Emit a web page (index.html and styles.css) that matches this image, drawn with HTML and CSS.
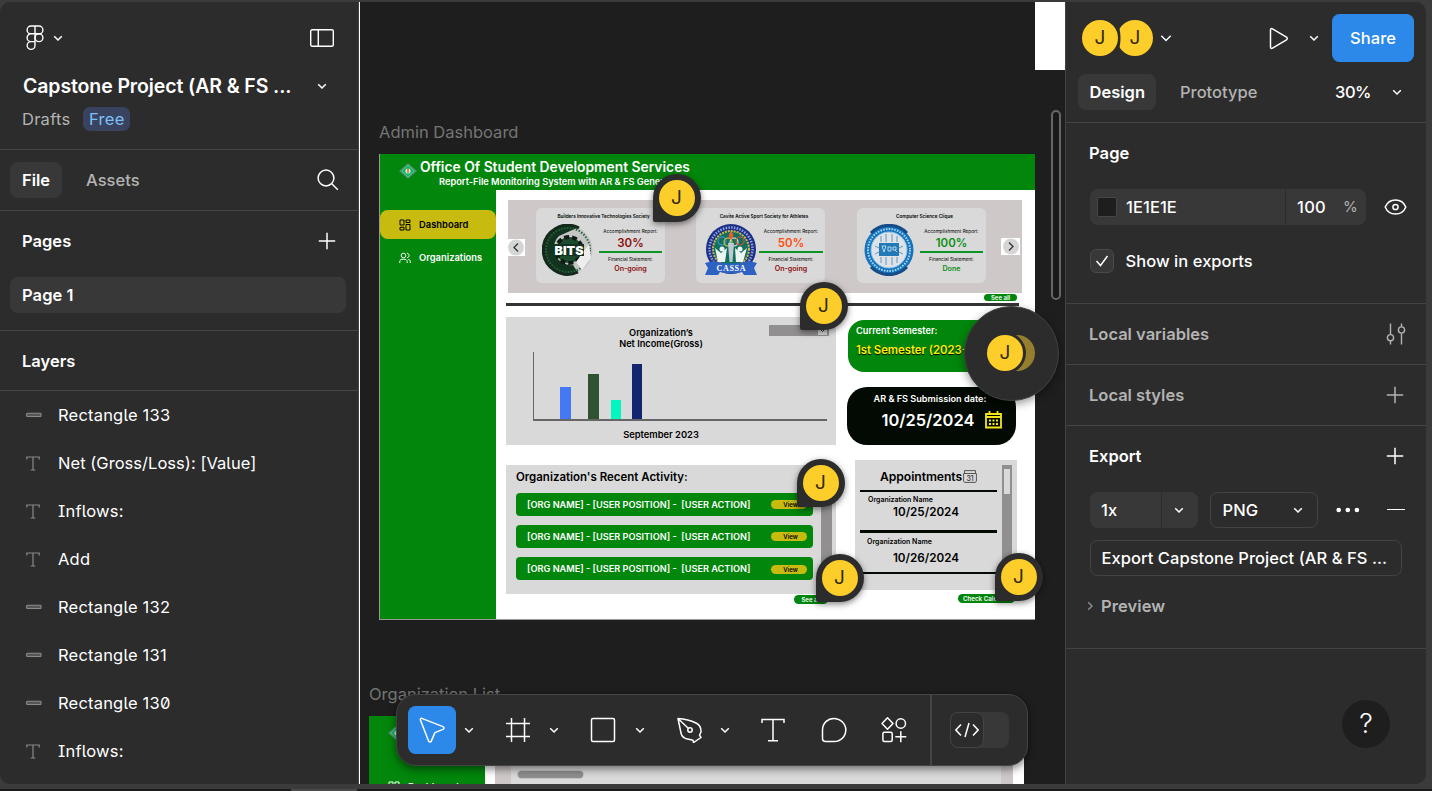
FILE: index.html
```html
<!DOCTYPE html>
<html lang="en">
<head>
<meta charset="utf-8">
<title>Capstone Project</title>
<link rel="stylesheet" href="styles.css">
</head>
<body>
<svg class="defs" width="0" height="0">
  <symbol id="chev" viewBox="0 0 12 12"><path d="M2.2 4.2 6 8l3.8-3.8" fill="none" stroke="currentColor" stroke-width="1.5"/></symbol>
  <symbol id="plus" viewBox="0 0 18 18"><path d="M9 .8v16.4M.8 9h16.4" fill="none" stroke="currentColor" stroke-width="1.5"/></symbol>
  <symbol id="tee" viewBox="0 0 14 15"><path d="M.8 3.5V1h12.4v2.5M7 1v13M4.700 14h4.600" fill="none" stroke="currentColor" stroke-width="1.2"/></symbol>
  <symbol id="bar" viewBox="0 0 16 6"><rect x=".7" y="1.200" width="14.300" height="3.300" rx=".6" fill="#555" stroke="currentColor" stroke-width="1.100"/></symbol>
  <symbol id="grid" viewBox="0 0 12 12"><path d="M1 1h4v5H1zM7 1h4v2.500H7zM7 5.500h4V11H7zM1 8.300h4V11H1z" fill="none" stroke="currentColor" stroke-width="1"/></symbol>
  <symbol id="crest" viewBox="0 0 18 16"><path d="M9 0l9 8-9 8-9-8z" fill="#58846a"/><path d="M9 2l6.500 6L9 14 2.500 8z" fill="#16b36a" stroke="#3ff0a0" stroke-width=".7"/><circle cx="9" cy="8" r="2.600" fill="#d8efc8"/><path d="M9 5v5" stroke="#e0662c" stroke-width="1.500"/></symbol>
</svg>
<div class="window">
  <aside class="left">
    <header class="file-head">
      <div class="row brand">
        <svg width="18" height="26" viewBox="0 0 18 26" fill="none" stroke="#fff" stroke-width="1.4"><path d="M9 1H5a3.900 3.900 0 0 0 0 7.800h4zM9 1h4a3.900 3.900 0 0 1 0 7.800H9zM9 8.800H5a3.900 3.900 0 0 0 0 7.800h4zM9 16.600H5a3.900 3.900 0 1 0 4 3.900z"/><circle cx="13" cy="12.700" r="3.900"/></svg>
        <svg class="chev logo-chev"><use href="#chev"/></svg>
        <svg class="push" width="24" height="18" viewBox="0 0 24 18" fill="none" stroke="#fff" stroke-width="1.400"><rect x=".7" y=".7" width="22.600" height="16.600" rx="1.500"/><path d="M8.300 1v16"/></svg>
      </div>
      <div class="row title"><b>Capstone Project (AR &amp; FS ...</b><svg class="chev push"><use href="#chev"/></svg></div>
      <div class="row sub"><span>Drafts</span><span class="badge">Free</span></div>
    </header>
    <nav class="row tabs">
      <span class="tab on">File</span><span class="tab">Assets</span>
      <svg class="push" width="22" height="22" viewBox="0 0 22 22" fill="none" stroke="#fff" stroke-width="1.500"><circle cx="9" cy="9" r="7.900"/><path d="M14.800 14.800l6 6"/></svg>
    </nav>
    <section class="pages">
      <div class="row sect"><b>Pages</b><svg class="plus push"><use href="#plus"/></svg></div>
      <div class="page-item">Page 1</div>
    </section>
    <div class="row sect layers-head"><b>Layers</b></div>
    <ul class="layers">
      <li><svg class="l-bar"><use href="#bar"/></svg>Rectangle 133</li>
      <li><svg class="l-tee"><use href="#tee"/></svg><span class="net">Net (Gross/Loss): [Value]</span></li>
      <li><svg class="l-tee"><use href="#tee"/></svg>Inflows:</li>
      <li><svg class="l-tee"><use href="#tee"/></svg>Add</li>
      <li><svg class="l-bar"><use href="#bar"/></svg>Rectangle 132</li>
      <li><svg class="l-bar"><use href="#bar"/></svg>Rectangle 131</li>
      <li><svg class="l-bar"><use href="#bar"/></svg>Rectangle 130</li>
      <li><svg class="l-tee"><use href="#tee"/></svg>Inflows:</li>
    </ul>
  </aside>

  <main class="canvas">
    <div class="node blank"></div>
    <div class="node label label-a">Admin Dashboard</div>
    <div class="node board">
      <header class="b-head">
        <svg class="b-crest"><use href="#crest"/></svg>
        <div><div class="b-title">Office Of Student Development Services</div><div class="b-sub">Report-File Monitoring System with AR &amp; FS Generation</div></div>
      </header>
      <div class="b-body">
        <nav class="b-side">
          <div class="b-link on"><svg width="12" height="12"><use href="#grid"/></svg>Dashboard</div>
          <div class="b-link"><svg width="12" height="12" viewBox="0 0 12 12" fill="none" stroke="#fff" stroke-width="1"><circle cx="4.500" cy="3.500" r="2.300"/><path d="M.8 11V9.500c0-1.600 1.300-2.300 3.700-2.300s3.700.7 3.700 2.300V11M8 1.300c2.800 0 2.800 4.300 0 4.300M9.300 7.400c1.300.3 2 1 2 2.200V11"/></svg>Organizations</div>
        </nav>
        <div class="b-main">
          <div class="carousel">
            <span class="arrow"><svg width="16" height="17" viewBox="0 0 16 16"><circle cx="8" cy="8" r="8" fill="#d5d5d5"/><path d="M10 4L6 8l4 4" fill="none" stroke="#333" stroke-width="1.300"/></svg></span>
            <article class="org">
              <h4>Builders Innovative Technologies Society</h4>
              <svg class="seal" viewBox="0 0 52 52"><circle cx="26" cy="26" r="24.500" fill="#c4c6c5"/><path d="M37 3A25 25 0 1 0 36 49L31 41A17 17 0 0 1 17 12z" fill="#12331f"/><path d="M37 4A24.500 24.500 0 1 0 36 48" fill="none" stroke="#14281b" stroke-width="3"/><circle cx="26" cy="26" r="22" fill="none" stroke="#27623a" stroke-width="2" stroke-dasharray="1.500 1.500"/><circle cx="27" cy="26" r="13" fill="#1c4a2e" stroke="#101a14" stroke-width="4" stroke-dasharray="5 3"/><path d="M34 38l13-18 2 14-9 12z" fill="#ecedec"/><path d="M11 20h31v12H11z" fill="#123220"/><text x="27" y="30.500" text-anchor="middle" textLength="29" lengthAdjust="spacingAndGlyphs" class="t-bits">BITS</text></svg>
              <div class="stat"><small>Accomplishment Report:</small><strong class="dred">30%</strong><i class="line"></i><small>Financial Statement:</small><em class="dred">On-going</em></div>
            </article>
            <article class="org two">
              <h4>Cavite Active Sport Society for Athletes</h4>
              <svg class="seal" viewBox="0 0 52 52"><circle cx="26" cy="25" r="25" fill="#1d2f86"/><circle cx="26" cy="25" r="21.500" fill="none" stroke="#8fa5dc" stroke-width="2.500" stroke-dasharray="1.500 1.300"/><circle cx="26" cy="25" r="18" fill="#11715f" stroke="#cdb84a" stroke-width="2" stroke-dasharray="2 1"/><g fill="none" stroke-width="1.100"><circle cx="17" cy="17" r="4" stroke="#4a8fd8"/><circle cx="23" cy="18" r="4" stroke="#e8c93a"/><circle cx="29" cy="18" r="4" stroke="#efefef"/><circle cx="35" cy="17" r="4" stroke="#e0492d"/></g><path d="M26 7c4 4 2 6 0 9-3-3-3-5 0-9z" fill="#f05a28"/><path d="M23 19h6l-1.500 19h-3z" fill="#bfc9cf"/><g fill="#edf3f0"><circle cx="17" cy="25" r="2.500"/><circle cx="35" cy="25" r="2.500"/><path d="M10 24l6 5 6-5-2 14h-7zM30 24l6 5 6-5-4 14h-7z"/></g><path d="M0 39l8-2q18 5 36 0l8 2-3 5 3 7H39l-2-3q-11 3-22 0l-2 3H0l3-7z" fill="#2d62c2"/><text x="26" y="46.500" text-anchor="middle" textLength="29" class="t-cassa">CASSA</text></svg>
              <div class="stat"><small>Accomplishment Report:</small><strong class="orange">50%</strong><i class="line"></i><small>Financial Statement:</small><em class="dred">On-going</em></div>
            </article>
            <article class="org">
              <h4>Computer Science Clique</h4>
              <svg class="seal" viewBox="0 0 52 52"><circle cx="26" cy="26" r="24.500" fill="#1772ba"/><path d="M8 9A25 25 0 0 1 44 9M8 43A25 25 0 0 0 44 43" fill="none" stroke="#154b86" stroke-width="3"/><circle cx="26" cy="26" r="21" fill="none" stroke="#9fd6f4" stroke-width="2" stroke-dasharray="1.600 1.200"/><circle cx="26" cy="26" r="18" fill="#dfe3e6" stroke="#84c4ec"/><path d="M18 18v-6M23 18v-8M29 18v-8M34 18v-6M18 33v6M23 33v8M29 33v8M34 33v6M12 22l4 2M12 30l4-2M40 22l-4 2M40 30l-4-2" stroke="#3b86bd" fill="none" stroke-width=".8"/><path d="M16 19h20v13H16z" fill="#2279b6"/><path d="M19 22h4l-2 6zM25 23h3v4h-3zM30 23h3v3h-3zM32 26l2 2" stroke="#d4edfc" fill="none" stroke-width=".8"/></svg>
              <div class="stat"><small>Accomplishment Report:</small><strong class="ok">100%</strong><i class="line"></i><small>Financial Statement:</small><em class="ok">Done</em></div>
            </article>
            <span class="arrow r"><svg width="16" height="17" viewBox="0 0 16 16"><circle cx="8" cy="8" r="8" fill="#d5d5d5"/><path d="M6 4l4 4-4 4" fill="none" stroke="#333" stroke-width="1.300"/></svg></span>
          </div>
          <span class="pill see">See all</span>
          <div class="rule"></div>
          <div class="cols">
            <div class="col-l">
              <section class="chart">
                <span class="select"><svg width="9" height="9" viewBox="0 0 9 9"><path d="M0 0h9v9H0z" fill="#d4d4d4"/><path d="M2.500 3.500l2 2 2-2" fill="none" stroke="#333"/></svg></span>
                <h5>Organization’s<br>Net Income(Gross)</h5>
                <div class="plot"><i style="height:32px"></i><i style="height:45px"></i><i style="height:19px"></i><i style="height:55px"></i></div>
                <p>September 2023</p>
              </section>
              <section class="recent">
                <h5>Organization's Recent Activity:</h5>
                <div class="act">[ORG NAME] - [USER POSITION] -&nbsp; [USER ACTION]<span>View</span></div>
                <div class="act">[ORG NAME] - [USER POSITION] -&nbsp; [USER ACTION]<span>View</span></div>
                <div class="act">[ORG NAME] - [USER POSITION] -&nbsp; [USER ACTION]<span>View</span></div>
                <i class="track"></i>
              </section>
              <span class="pill see2">See all</span>
            </div>
            <div class="col-r">
              <section class="sem"><h5>Current Semester:</h5><p>1st Semester (2023-2024)</p></section>
              <section class="due"><h5>AR &amp; FS Submission date:</h5><div class="row"><span>10/25/2024</span><svg width="17" height="18" viewBox="0 0 17 18"><path d="M1 3h15v13.500H1zM1 6h15M4.500 0v3M12.500 0v3" fill="none" stroke="#f5e51b" stroke-width="1.800"/><path d="M4 9.500h9M4 13h9" stroke="#f5e51b" stroke-width="2" stroke-dasharray="2 1.500"/></svg></div></section>
              <section class="appt">
                <h5>Appointments<svg width="14" height="13" viewBox="0 0 14 13"><path d="M.6 3.500h12.800V11L12.500 12.400H1.500L.6 11zM1.500 3.500V.6h11v2.900" fill="none" stroke="#555"/><text x="7" y="10.500" text-anchor="middle" class="t-31">31</text></svg></h5>
                <hr><small>Organization Name</small><strong>10/25/2024</strong>
                <hr class="h2"><small class="s2">Organization Name</small><strong class="d2">10/26/2024</strong><hr class="h3">
                <i class="track"><i></i></i>
              </section>
              <span class="pill check">Check Calendar</span>
            </div>
          </div>
        </div>
      </div>
    </div>
    <div class="node label label-b">Organization List</div>
    <div class="node board2">
      <div class="side2"><svg class="b-crest"><use href="#crest"/></svg><div><svg width="12" height="12"><use href="#grid"/></svg>Dashboard</div></div>
      <div class="main2"><div><i></i></div></div>
    </div>
    <div class="pin p1"><b>J</b></div>
    <div class="pin p2"><b>J</b></div>
    <div class="pin p3"><b>J</b></div>
    <div class="pin p4"><b>J</b></div>
    <div class="pin p5"><b>J</b></div>
    <div class="cluster"><b class="front">J</b><b class="back"></b></div>
    <div class="scroll"></div>
    <div class="toolbar">
      <span class="tool active"><svg width="28" height="28" viewBox="0 0 28 28" fill="none" stroke="#fff" stroke-width="1.500" stroke-linejoin="round"><path d="M3.800 2.400 25 10.600c1.300.6 1.300 2.200 0 2.800l-8.100 3.200-3.600 8.500c-.6 1.300-2.200 1.200-2.700-.1L2.400 4C2 2.900 2.800 2 3.800 2.400z"/></svg></span>
      <svg class="chev"><use href="#chev"/></svg>
      <svg class="tool-i t2" viewBox="0 0 26 26" fill="none" stroke="#fff" stroke-width="1.500"><path d="M6.500 1v24M19.500 1v24M1 6.500h24M1 19.500h24"/></svg>
      <svg class="chev"><use href="#chev"/></svg>
      <svg class="tool-i t3" viewBox="0 0 26 26" fill="none" stroke="#fff" stroke-width="1.500"><rect x="1.500" y="1.500" width="23" height="23" rx="1.500"/></svg>
      <svg class="chev"><use href="#chev"/></svg>
      <svg class="tool-i t4" viewBox="0 0 26 26" fill="none" stroke="#fff" stroke-width="1.500" stroke-linejoin="round"><path d="M1 1.500 4 16c.5 2.500 2 4.500 4.500 5.400l7.500 1.800.5 2.300 7.500-5-1.500-2.300L24 15c.2-4-1.500-7.300-5-9C14 3.600 8 2 1 1.500zM1 1.500l10.500 10"/><circle cx="13" cy="13" r="2.200"/></svg>
      <svg class="chev"><use href="#chev"/></svg>
      <svg class="tool-i t5" viewBox="0 0 26 26" fill="none" stroke="#fff" stroke-width="1.500"><path d="M2 6V2.500h22V6M13 2.500v21M8 23.700h10"/></svg>
      <svg class="tool-i t6" viewBox="0 0 26 26" fill="none" stroke="#fff" stroke-width="1.500"><path d="M1.500 13.200C1.500 6 6.800 1.500 13 1.500S24.800 6.500 24.800 13 19.600 24.500 13 24.500H4.500a3 3 0 0 1-3-3z"/></svg>
      <svg class="tool-i t7" viewBox="0 0 26 26" fill="none" stroke="#fff" stroke-width="1.500"><path d="M6.500.8 12 6.500 6.500 12.300 1 6.500z" stroke-linejoin="round"/><circle cx="19.800" cy="6.500" r="4.700"/><rect x="1.900" y="15.200" width="9.300" height="9.300" rx="1.500"/><path d="M19.800 14.200v11M14.300 19.700h11"/></svg>
      <span class="tdiv"></span>
      <span class="toggle"><span><svg width="24" height="16" viewBox="0 0 24 16" fill="none" stroke="#fff" stroke-width="1.500"><path d="M6 2.500.9 8 6 13.500M18 2.500 23.100 8 18 13.500M14 1l-4 14"/></svg></span></span>
    </div>
  </main>

  <aside class="right">
    <div class="row who">
      <b class="av">J</b><b class="av second">J</b><svg class="av-chev" width="12" height="12" viewBox="0 0 12 12"><path d="M1.300 3.700 6 8.400l4.700-4.700" fill="none" stroke="#fff" stroke-width="1.400"/></svg>
      <svg class="push play" width="20" height="23" viewBox="0 0 20 23" fill="none" stroke="#fff" stroke-width="1.500" stroke-linejoin="round"><path d="M1.500 3v17c0 1.300 1 1.800 2 1.200l14-8.400c1-.6 1-2 0-2.600L3.500 1.800c-1-.6-2 0-2 1.200z"/></svg>
      <svg class="chev play-chev"><use href="#chev"/></svg>
      <button class="share">Share</button>
    </div>
    <div class="row modes"><span class="tab on">Design</span><span class="tab">Prototype</span><span class="push zoom">30%</span><svg class="chev"><use href="#chev"/></svg></div>
    <section class="page-sec">
      <b>Page</b>
      <div class="row fill"><div class="field"><i class="swatch"></i><span class="hex">1E1E1E</span><span class="op">100</span><span class="pct">%</span></div>
      <svg width="23" height="18" viewBox="0 0 23 18" fill="none" stroke="#fff" stroke-width="1.500"><path d="M1.200 9C3 4.600 6.800 2 11.500 2s8.500 2.600 10.300 7c-1.800 4.400-5.600 7-10.300 7S3 13.400 1.200 9z"/><circle cx="11.500" cy="9" r="2.600"/></svg></div>
      <div class="row shown"><span class="box"><svg width="14" height="12" viewBox="0 0 14 12"><path d="M1.500 6l4 4.500L12.500 1" fill="none" stroke="#fff" stroke-width="1.500"/></svg></span>Show in exports</div>
    </section>
    <div class="row local"><b>Local variables</b><svg class="push vars" width="20" height="22" viewBox="0 0 20 22" fill="none" stroke="#b3b3b3" stroke-width="1.400"><path d="M4.500.5v11M4.500 18v3.500M15.500.5v3.200M15.500 10.500v11"/><circle cx="4.500" cy="14.700" r="3.100"/><circle cx="15.500" cy="7" r="3.100"/></svg></div>
    <div class="row local"><b>Local styles</b><svg class="plus push"><use href="#plus"/></svg></div>
    <section class="export">
      <div class="row local white"><b>Export</b><svg class="plus push"><use href="#plus"/></svg></div>
      <div class="row ex-row">
        <span class="scale">1x</span><span class="scale-c"><svg class="chev"><use href="#chev"/></svg></span>
        <span class="fmt">PNG<svg class="chev push"><use href="#chev"/></svg></span>
        <svg class="dots" width="24" height="6" viewBox="0 0 24 6" fill="#fff"><circle cx="2.700" cy="3" r="2.300"/><circle cx="11.800" cy="3" r="2.300"/><circle cx="20.900" cy="3" r="2.300"/></svg>
        <i class="minus"></i>
      </div>
      <button class="ex-btn">Export Capstone Project (AR &amp; FS ...</button>
      <div class="row preview"><svg class="chev side"><use href="#chev"/></svg><b>Preview</b></div>
    </section>
    <span class="help">?</span>
  </aside>
</div>
<footer class="taskbar"><i></i></footer>
</body>
</html>
```
FILE: styles.css
```css
* { box-sizing: border-box; }
body { margin: 0; width: 1432px; height: 791px; overflow: hidden; background: #3b3b3b; padding-top: 2px;
  font: 400 16.5px/24px Inter, sans-serif; letter-spacing: .08px; color: #fff; display: flex; flex-direction: column; }
b, h4, h5 { font-weight: 600; margin: 0; }
i, em { font-style: normal; }
p { margin: 0; }
svg { display: block; flex: none; }
.defs { position: absolute; }
.row { display: flex; align-items: center; }
.push { margin-left: auto; }
.chev { width: 12px; height: 12px; }
.plus { width: 18px; height: 18px; }
.window { display: flex; width: 1426px; height: 782px; border-radius: 10px; overflow: hidden; background: #2c2c2c; flex: none; }

/* left panel */
.left { width: 360px; flex: none; border-right: 1px solid #fff; box-shadow: inset -1px 0 #444; }
.file-head { height: 148px; border-bottom: 1px solid #444; padding: 23px 24px 0 22px; }
.brand { height: 26px; padding: 0 1px 0 4px; }
.logo-chev { margin-left: 8px; }
.title { height: 24px; margin-top: 23px; font-size: 19.500px; padding: 0 7px 0 1px; letter-spacing: -.11px; }
.sub { height: 24px; margin-top: 9px; color: #b3b3b3; letter-spacing: .25px; }
.badge { margin-left: 13px; height: 24px; padding: 0 5.500px; border-radius: 7px; background: #394360; color: #7cc0f8; letter-spacing: .35px; }
.tabs { height: 61px; border-bottom: 1px solid #444; padding: 0 20px 0 10px; }
.tab { height: 36px; line-height: 36px; padding: 0 12px; border-radius: 7.500px; color: #b3b3b3; font-weight: 500; letter-spacing: 0; }
.tab.on { background: #383838; color: #fff; font-weight: 600; }
.tab + .tab { margin-left: 12px; }
.pages { height: 120px; border-bottom: 1px solid #444; }
.sect { height: 60px; padding: 0 23px 0 22px; letter-spacing: .02px; }
.page-item { margin: 6px 13px 0 10px; height: 36px; line-height: 36px; padding-left: 12px; border-radius: 7.500px; background: #383838; font-weight: 600; }
.layers-head { border-bottom: 1px solid #444; }
.layers { margin: 0; padding: 0; list-style: none; font-feature-settings: "ss02"; letter-spacing: .2px; }
.layers li { height: 48px; display: flex; align-items: center; padding-left: 26px; color: #fff; }
.layers .net { letter-spacing: .04px; }
.layers svg { color: #8a8a8a; }
.l-bar { width: 16px; height: 6px; margin-right: 16px; }
.l-tee { width: 14px; height: 15px; margin-right: 18px; }

/* canvas */
.canvas { position: relative; width: 705px; flex: none; overflow: hidden; background: #1e1e1e; }
.node { position: absolute; }
.blank { left: 674.500px; top: 0; width: 31px; height: 68px; background: #fff; }
.label { color: #757575; letter-spacing: 0; }
.label-a { left: 19px; top: 118px; }
.label-b { left: 9px; top: 680px; }
.board { left: 19px; top: 152px; width: 655.500px; height: 466px; background: #fff; border: 0 solid #999; border-left-width: 1px; border-bottom-width: 1px; color: #000; letter-spacing: 0; overflow: hidden; }
.b-head { height: 36px; background: #02860b; color: #fff; display: flex; padding: 5px 0 0 19px; font-weight: 600; white-space: nowrap; }
.b-crest { width: 18px; height: 16px; margin: 4px 3px 0 0; }
.b-title { font-size: 13.820px; line-height: 16px; }
.b-sub { font-size: 9.250px; line-height: 13px; padding-left: 19px; }
.b-body { display: flex; height: 430px; }
.b-side { width: 116px; flex: none; background: #02860b; padding-top: 20px; }
.b-link { height: 29px; display: flex; align-items: center; gap: 8px; padding-left: 19px; color: #fff; font-size: 9.400px; font-weight: 600; border-radius: 8px; margin-bottom: 4.500px; }
.b-link.on { background: #c6bb0e; color: #000; }
.b-main { width: 538px; padding: 10px 0 0 10px; flex: none; display: flex; flex-direction: column; }
.carousel { width: 514px; height: 93px; flex: none; margin-left: 2px; background: #cfc8c8; display: flex; align-items: flex-start; padding-top: 8px; }
.arrow { width: 17px; height: 17px; background: #fff; margin: 31px 11px 0 0; }
.arrow.r { width: 19px; margin: 29.500px 0 0 -17px; padding-left: 2px; }
.org { width: 129px; height: 75px; border-radius: 6px; background: #d9d9d9; margin-right: 32px; display: grid; grid-template: 16px 1fr / 57px 1fr; padding: 0 3px 0 6px; }
.org:nth-child(2) { margin-right: 31px; }
.two .seal { margin-left: 3px; }
.two { padding-right: 2px; }
.org h4 { grid-column: 1 / 3; font-size: 4.650px; line-height: 17px; text-align: center; padding-left: 3px; }
.seal { width: 52px; height: 52px; }
.stat { text-align: center; line-height: 10px; padding-top: 1.500px; white-space: nowrap; }
.stat small { display: block; font-size: 4.700px; line-height: 10px; }
.stat strong { display: block; font-size: 11.500px; line-height: 15.500px; font-weight: 600; }
.stat .line { display: block; height: 1.500px; background: #0c9426; margin: 0 0 1px; }
.stat em { display: block; font-size: 7.100px; font-weight: 600; line-height: 9px; }
.dred { color: #8b0f0f; } .orange { color: #ff4d0d; } .ok { color: #0b8f14; }
.t-bits { font: 900 12px Inter, sans-serif; fill: #fff; }
.t-cassa { font: 700 8px "Liberation Serif", serif; fill: #fff; }
.pill { display: block; background: #02860b; color: #fff; border-radius: 5px; font-weight: 600; text-align: center; white-space: nowrap; }
.see { width: 33px; height: 7px; font-size: 6px; line-height: 7px; margin: 1px 0 0 478px; }
.rule { width: 513px; height: 3px; background: #333; margin-top: 2px; flex: none; }
.cols { display: flex; gap: 11px; padding-top: 10.500px; }
.col-l { width: 330px; }
.col-r { width: 170px; padding-top: 3.500px; }
.chart { position: relative; height: 128.500px; background: #d9d9d9; text-align: center; padding: 10px 9px 0 27px; font-weight: 600; }
.chart h5 { line-height: 11px; font-size: 9.200px; padding-right: 38px; }
.plot { height: 69px; margin-top: 3px; border-left: 1px solid #666; border-bottom: 2px solid #666; display: flex; align-items: flex-end; padding-left: 26px; }
.plot i { width: 11px; background: #4478f5; margin-right: 17px; }
.plot i:nth-child(2) { background: #2f5231; margin-right: 12px; }
.plot i:nth-child(3) { background: #00f8c0; width: 10px; margin-right: 11px; }
.plot i:nth-child(4) { background: #14256f; width: 10px; }
.chart p { font-size: 9.350px; line-height: 28px; padding-right: 38px; }
.select { position: absolute; right: 7px; top: 8px; width: 60px; height: 11px; background: #918f8f; padding: 1px 2px; }
.select svg { margin-left: auto; }
.recent { position: relative; height: 129px; margin-top: 19.500px; background: #d9d9d9; padding: 5px 10px 0; }
.recent h5 { font-size: 11.480px; line-height: 15px; margin-bottom: 8px; }
.act { width: 297px; height: 23.500px; margin-bottom: 8.700px; border-radius: 4px; background: #02860b; color: #fff; font-size: 9.180px; font-weight: 600; padding: 1px 6px 0 11px; display: flex; align-items: center; white-space: nowrap; }
.act span { margin-left: auto; width: 36px; height: 9px; border-radius: 5px; background: #c6bb0e; color: #000; font-size: 6px; line-height: 9px; text-align: center; padding-left: 3px; }
.recent .track { position: absolute; right: 4px; top: 8px; width: 11px; height: 105px; background: #918f8f; }
.see2 { width: 34px; height: 9px; font-size: 6px; line-height: 9px; margin: 1px 0 0 288px; }
.sem { height: 52px; width: 168px; margin-left: 1px; border-radius: 16px; background: #02860b; color: #fff; padding: 4px 8px; white-space: nowrap; overflow: hidden; }
.sem h5 { font-size: 9.200px; line-height: 14px; }
.sem p { color: #fff000; font-size: 11.300px; font-weight: 600; line-height: 25px; text-shadow: 0 .5px 1px #000; }
.due { height: 58px; width: 169px; margin-top: 14.500px; margin-left: -.5px; border-radius: 20px; background: #020a03; color: #fff; padding: 5px 0 0 27px; white-space: nowrap; }
.due h5 { font-size: 9.150px; line-height: 14px; }
.due .row { padding-left: 8px; font-size: 16.450px; font-weight: 600; height: 28px; gap: 11px; }
.appt { position: relative; height: 130px; width: 162px; margin: 15px 0 0 8px; background: #d9d9d9; padding: 8px 20px 0 5px; }
.appt h5 { display: flex; align-items: center; gap: 1px; font-size: 12.200px; line-height: 18px; padding-left: 20px; letter-spacing: -.08px; }
.appt hr { border: 0; height: 2.500px; background: #020a03; margin: 4px 0 3px; }
.appt small { display: block; font-size: 7px; font-weight: 600; line-height: 9px; padding-left: 8px; }
.appt strong { display: block; font-size: 11.700px; font-weight: 600; line-height: 17px; text-align: center; padding-right: 5px; }
.appt .h2 { margin: 9px 0 4px; } .appt .s2 { padding-left: 7px; } .appt .d2 { padding-top: 4px; } .appt .h3 { margin-top: 5px; }
.appt .track { position: absolute; right: 5px; top: 5px; width: 10px; height: 121px; background: #918f8f; padding: 4px 2px; }
.appt .track i { display: block; width: 6px; height: 25px; background: #d9d9d9; }
.t-31 { font: 500 7px Inter, sans-serif; fill: #333; }
.check { width: 57px; height: 9px; font-size: 6.200px; line-height: 9px; margin: 4px 0 0 111px; text-align: left; padding-left: 5px; }
.board2 { left: 9px; top: 714px; width: 655px; height: 70px; background: #fff; display: flex; overflow: hidden; }
.side2 { width: 116px; background: #02860b; padding: 5px 0 0 19px; font-size: 9.500px; font-weight: 600; }
.side2 div { display: flex; align-items: center; gap: 8px; padding-top: 34px; }
.main2 { margin-left: 10px; width: 518px; background: #cfc8c8; padding: 0 12px 0 16px; }
.main2 div { height: 70px; background: #dadada; padding: 55px 0 0 7px; }
.main2 i { display: block; width: 65px; height: 7px; border-radius: 4px; background: #8f8f8f; box-shadow: 0 0 0 1px #c4c4c4; }

/* comment pins */
.pin { position: absolute; width: 48px; height: 48px; border-radius: 24px 24px 24px 2px; background: #2c2c2c; box-shadow: 0 2px 6px rgba(0,0,0,.5); padding: 6px; }
.pin b, .av, .front { display: block; width: 36px; height: 36px; border-radius: 50%; background: #fdce2a; color: #33290c; font-weight: 400; line-height: 36px; text-align: center; font-size: 19px; }
.p1 { left: 292.500px; top: 171.500px; } .p2 { left: 439.500px; top: 280px; } .p3 { left: 436.500px; top: 456.500px; }
.p4 { left: 455.500px; top: 552px; } .p5 { left: 634.500px; top: 551px; }
.cluster { position: absolute; left: 604px; top: 303.500px; width: 95px; height: 95px; border-radius: 50%; background: #2c2c2c; border: 1px solid #414141; box-shadow: 0 3px 8px rgba(0,0,0,.4); display: flex; align-items: center; padding-left: 22px; }
.front { position: relative; z-index: 1; box-shadow: 0 0 0 3px #2c2c2c; flex: none; }
.back { width: 36px; height: 36px; border-radius: 50%; background: #957f2e; margin-left: -24px; flex: none; }
.scroll { position: absolute; left: 691px; top: 108px; width: 10px; height: 190px; border: 2px solid #666; border-radius: 5px; background: #181818; }

/* toolbar */
.toolbar { position: absolute; left: 36px; top: 692px; width: 632px; height: 72px; border-radius: 20px; background: #2c2c2c; border: 1px solid #444; box-shadow: 0 3px 9px rgba(0,0,0,.5); display: flex; align-items: center; padding-left: 11px; }
.tool.active { width: 48px; height: 48px; border-radius: 7.500px; background: #2c88e9; padding: 10px; margin-right: 7px; }
.tool-i { width: 26px; height: 26px; }
.t2 { margin-left: 30px; margin-right: 17px; } .t3 { margin-left: 30px; margin-right: 18px; } .t4 { margin-left: 31px; margin-right: 16px; }
.t5 { margin-left: 29px; } .t6 { margin-left: 35px; } .t7 { margin-left: 34px; }
.tdiv { width: 1.500px; height: 70px; background: #444; margin: 0 18.500px 0 23px; }
.toggle { width: 59px; height: 36px; border-radius: 8px; background: #383838; }
.toggle span { display: flex; align-items: center; justify-content: center; width: 34px; height: 36px; border-radius: 8px; background: #2c2c2c; border: 1px solid #444; }

/* right panel */
.right { position: relative; flex: 1; border-left: 1px solid #444; }
.who { height: 72px; padding: 0 12px 0 16px; }
.second { margin-left: -1px; clip-path: path("M-1 0h40v37H-1C5 27 5 9-1 0z"); }
.av-chev { margin-left: 7px; }
.play { margin-right: 0; }
.play-chev { margin: 0 12px 0 19.500px; }
.share { width: 82px; height: 48px; border: 0; border-radius: 7.500px; background: #2c88e9; color: #fff; font: 500 16.500px Inter, sans-serif; letter-spacing: .1px; padding: 0; }
.modes { height: 49px; padding: 0 23px 12px 12px; border-bottom: 1px solid #444; }
.modes .tab { padding: 0 11.500px; }
.zoom { font-weight: 500; margin-right: 20px; letter-spacing: -.5px; }
.page-sec { height: 181px; border-bottom: 1px solid #444; padding: 18px 19px 0 23px; }
.page-sec > b { display: block; }
.fill { margin: 24px 0 0 1px; justify-content: space-between; }
.field { width: 276px; height: 36px; background: #383838; border-radius: 7.500px; display: flex; align-items: center; padding-left: 7px; font-weight: 500; }
.swatch { width: 20px; height: 20px; background: #1e1e1e; border: 1px solid #464646; border-radius: 2px; margin-right: 9px; }
.hex { width: 159px; }
.op { width: 58px; line-height: 34px; border-left: 1px solid #2c2c2c; padding-left: 11px; letter-spacing: .3px; }
.pct { color: #b3b3b3; font-weight: 400; font-size: 15px; }
.shown { margin: 24px 0 0 1px; font-weight: 500; letter-spacing: .05px; }
.box { width: 24px; height: 24px; background: #383838; border: 1px solid #4a4a4a; border-radius: 6px; display: flex; align-items: center; justify-content: center; margin-right: 11.500px; }
.local { height: 61px; border-bottom: 1px solid #444; padding: 0 22px 0 23px; color: #b3b3b3; letter-spacing: 0; }
.vars { margin-right: -2px; }
.export { height: 223px; border-bottom: 1px solid #444; }
.local.white { color: #fff; border: 0; height: 60px; }
.ex-row { padding: 6px 21px 0 24px; font-weight: 500; }
.scale { width: 71px; height: 36px; line-height: 36px; padding-left: 11px; background: #383838; border-radius: 7.500px 0 0 7.500px; margin-right: 1px; }
.scale-c { width: 36px; height: 36px; background: #383838; border-radius: 0 7.500px 7.500px 0; padding: 12px 11px; margin-right: 12px; }
.fmt { width: 108px; height: 36px; border: 1px solid #444; border-radius: 7.500px; display: flex; align-items: center; padding: 0 13px 0 11.500px; }
.dots { margin: -1px 0 0 17.500px; }
.minus { width: 18px; height: 1.500px; background: #fff; margin-left: auto; margin-top: -1px; }
.ex-btn { display: block; margin: 12px 0 0 24px; width: 312px; height: 36px; border: 1px solid #444; border-radius: 7.500px; background: none; color: #fff; font: 500 16.500px Inter, sans-serif; letter-spacing: .05px; padding: 0 0 0 10.500px; text-align: left; white-space: nowrap; }
.preview { margin: 18px 0 0 18px; color: #b3b3b3; }
.side { transform: rotate(-90deg); margin-right: 5px; color: #8a8a8a; }
.help { position: absolute; left: 276px; top: 698px; width: 48px; height: 48px; border-radius: 50%; background: #1e1e1e; font: 300 27px/48px Inter, sans-serif; text-align: center; }
.taskbar { margin-top: 5px; height: 2px; background: #1c1a1b; }
.taskbar i { display: block; margin-left: 291px; width: 66px; height: 2px; background: #4a4848; }
```
